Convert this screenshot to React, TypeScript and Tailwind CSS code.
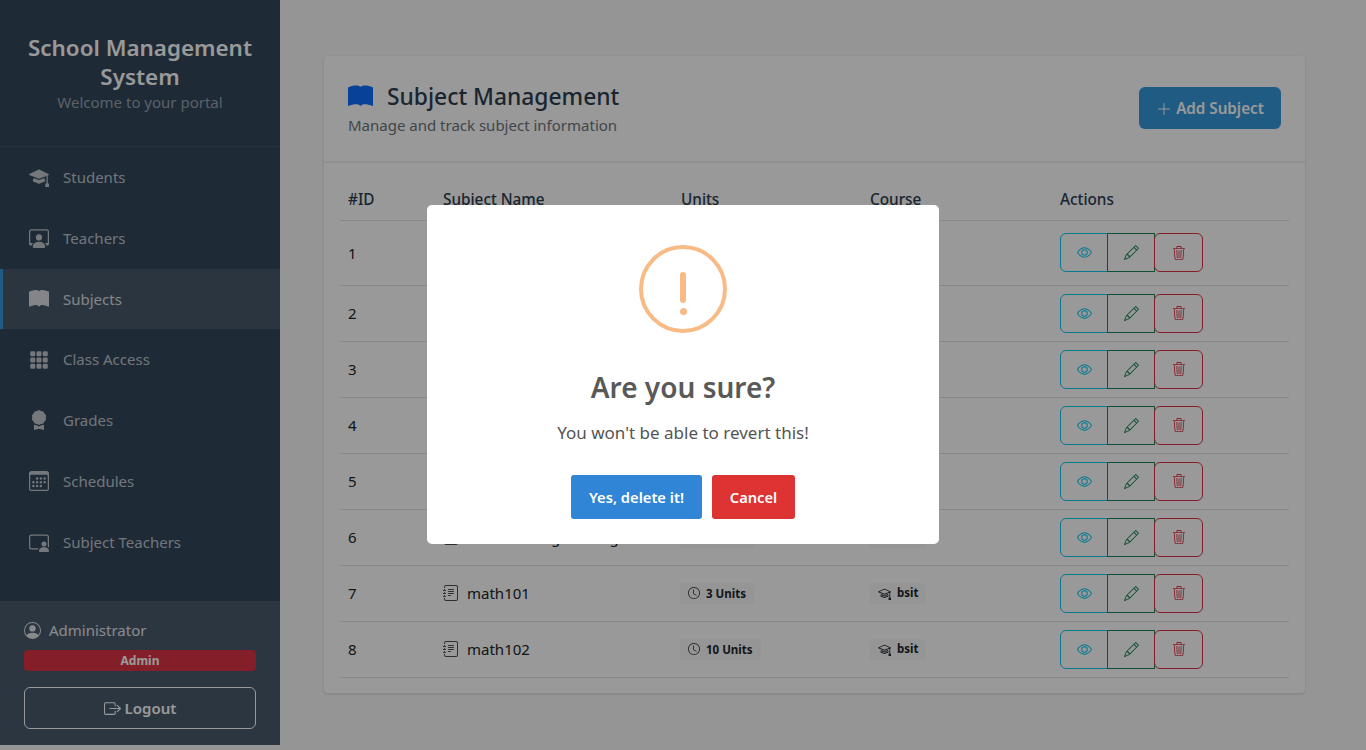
import {
  BsAwardFill, BsBookFill, BsBoxArrowRight, BsCalendar3, BsClock, BsEye, BsGrid3X3GapFill,
  BsJournalText, BsMortarboard, BsMortarboardFill, BsPencil, BsPersonCircle, BsPersonVideo3,
  BsPersonWorkspace, BsPlusLg, BsTrash3,
} from "react-icons/bs";

const font = "font-['Noto_Sans','Open_Sans',sans-serif]";

const nav = [
  { label: "Students", icon: BsMortarboardFill },
  { label: "Teachers", icon: BsPersonWorkspace },
  { label: "Subjects", icon: BsBookFill, active: true },
  { label: "Class Access", icon: BsGrid3X3GapFill },
  { label: "Grades", icon: BsAwardFill },
  { label: "Schedules", icon: BsCalendar3 },
  { label: "Subject Teachers", icon: BsPersonVideo3 },
];

const rows = [
  { id: 1, tall: true },
  { id: 2 },
  { id: 3 },
  { id: 4 },
  { id: 5 },
  { id: 6, name: "Software Engineering", units: "3 Units", course: "bsit" },
  { id: 7, name: "math101", units: "3 Units", course: "bsit" },
  { id: 8, name: "math102", units: "10 Units", course: "bsit" },
];

function Sidebar() {
  return (
    <aside className="w-[280px] h-[745px] shrink-0 flex flex-col bg-[#32465b] text-white">
      <div className="h-[147px] border-b border-[#43566a] pt-[33px] text-center">
        <h1 className="text-[22.4px] leading-[29px] font-semibold">School Management System</h1>
        <p className="text-[15px] leading-[22px] text-white/50">Welcome to your portal</p>
      </div>
      <nav className="flex-1">
        {nav.map(n => (
          <div key={n.label}
            className={`h-[60.75px] flex items-center gap-[14px] text-[15px] ${n.active ? "border-l-[3px] border-[#3498db] pl-[26px] bg-white/10 text-white/80" : "pl-[29px] text-white/70"}`}>
            <n.icon size={20} />
            <span>{n.label}</span>
          </div>
        ))}
      </nav>
      <div className="h-[144px] border-t border-[#4f6072] bg-[#4a5b6c] px-6 pt-[18px]">
        <div className="flex items-center gap-2 text-[15px] leading-[20px] text-white/85">
          <BsPersonCircle size={17} />
          <span>Administrator</span>
        </div>
        <div className="mt-[10px] h-[21px] rounded bg-[#dc3545] text-center text-[12px] leading-[21px] font-bold">Admin</div>
        <button className="mt-4 h-[42px] w-full flex items-center justify-center gap-1 rounded-md border border-white text-[15px] font-semibold">
          <BsBoxArrowRight size={17} />
          Logout
        </button>
      </div>
    </aside>
  );
}

function Row({ r }: { r: (typeof rows)[number] }) {
  return (
    <tr className={`border-b border-[#dee2e6] ${r.tall ? "h-[65px]" : "h-[56px]"}`}>
      <td className={`px-2 text-[15px] ${r.tall ? "pt-[2px]" : ""}`}>{r.id}</td>
      <td className="px-2">
        {r.name && (
          <div className="flex items-center gap-2 text-[15px]">
            <BsJournalText size={16} className="text-[#495057]" />
            {r.name}
          </div>
        )}
      </td>
      <td className="px-2">
        {r.units && (
          <span className="-ml-px mt-[2px] inline-flex items-center gap-[6px] h-[21px] px-2 rounded bg-[#f8f9fa] text-[11.5px] font-bold">
            <BsClock size={12} />
            {r.units}
          </span>
        )}
      </td>
      <td className="px-2">
        {r.course && (
          <span className="mt-[2px] inline-flex items-center gap-[6px] h-[21px] px-2 rounded bg-[#f8f9fa] text-[11.5px] font-bold">
            <BsMortarboard size={13} />
            {r.course}
          </span>
        )}
      </td>
      <td className="px-2">
        <div className="flex h-[39px]">
          <button className="w-[48px] flex items-center justify-center rounded-l-md border border-[#0dcaf0] text-[#0dcaf0]"><BsEye size={15} /></button>
          <button className="-ml-px w-[48px] flex items-center justify-center border border-[#198754] text-[#198754]"><BsPencil size={15} /></button>
          <button className="-ml-px w-[49px] flex items-center justify-center rounded-md border border-[#dc3545] text-[#dc3545]"><BsTrash3 size={14} /></button>
        </div>
      </td>
    </tr>
  );
}

export default function App() {
  return (
    <div className={`${font} flex min-h-[750px] bg-[#f8f9fa] text-[#212529]`}>
      <Sidebar />
      <main className="flex-1 pl-[44px] pr-[61px] pt-[56px]">
        <div className="bg-white rounded shadow-[0_1px_3px_rgba(0,0,0,0.15)]">
          <div className="h-[107px] flex items-center justify-between border-b-2 border-[#eeeeee] pl-6 pr-6">
            <div>
              <div className="flex items-center gap-[14px] text-[#2c3e50]">
                <BsBookFill size={25} className="text-[#0d6efd]" />
                <h2 className="text-[22.8px] leading-[32px] font-medium">Subject Management</h2>
              </div>
              <p className="mt-[1px] text-[15px] text-[#6c757d]">Manage and track subject information</p>
            </div>
            <button className="mb-[2px] pt-[2px] h-[42px] w-[142px] flex items-center justify-center gap-1 rounded-md bg-[#3498db] text-white text-[15.2px] font-semibold">
              <BsPlusLg size={16} />
              Add Subject
            </button>
          </div>
          <div className="px-4 pt-[17px] pb-[15px]">
            <table className="w-full table-fixed border-collapse text-left">
              <colgroup>
                <col className="w-[95px]" />
                <col className="w-[238px]" />
                <col className="w-[189px]" />
                <col className="w-[190px]" />
                <col />
              </colgroup>
              <thead>
                <tr className="h-[40px] border-b border-[#dee2e6] text-[15.3px] text-[#2c3e50]">
                  <th className="px-2 font-medium">#ID</th>
                  <th className="px-2 font-medium">Subject Name</th>
                  <th className="px-2 font-medium">Units</th>
                  <th className="px-2 font-medium">Course</th>
                  <th className="px-2 font-medium">Actions</th>
                </tr>
              </thead>
              <tbody>
                {rows.map(r => <Row key={r.id} r={r} />)}
              </tbody>
            </table>
          </div>
        </div>
      </main>
      {/* delete confirm */}
      <div className="fixed inset-0 flex items-center justify-center bg-black/40 pb-px">
        <div className="w-[512px] h-[339px] rounded-[5px] bg-white pt-[40px] flex flex-col items-center">
          <div className="w-[88px] h-[88px] rounded-full border-[4px] border-[#f8bb86] flex flex-col items-center justify-center gap-[5px] pt-[8px]">
            <div className="w-[6px] h-[31px] rounded-full bg-[#f8bb86]" />
            <div className="w-[7px] h-[7px] rounded-full bg-[#f8bb86]" />
          </div>
          <h2 className="mt-[32px] text-[28px] leading-[44px] font-semibold text-[#595959]">Are you sure?</h2>
          <p className="mt-[11px] text-[17px] leading-[26px] text-[#545454]">You won't be able to revert this!</p>
          <div className="mt-[29px] flex gap-[10px]">
            <button className="w-[131px] h-[44px] rounded-[3px] bg-[#3085d6] text-white text-[14.7px] font-semibold">Yes, delete it!</button>
            <button className="w-[83px] h-[44px] rounded-[3px] bg-[#dd3333] text-white text-[14.7px] font-semibold">Cancel</button>
          </div>
        </div>
      </div>
    </div>
  );
}
